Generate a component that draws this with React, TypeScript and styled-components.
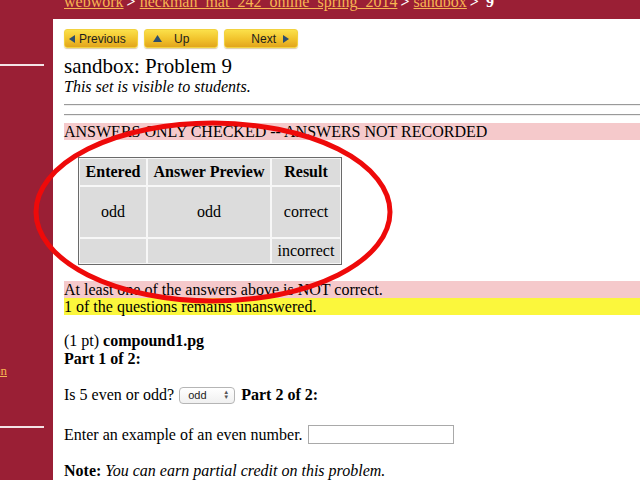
import React from "react";
import styled, { createGlobalStyle } from "styled-components";

const Global = createGlobalStyle`
  html, body { margin: 0; padding: 0; background: #9a1f35; }
  body { font-family: "Liberation Serif", "Times New Roman", serif; font-size: 16px; color: #000; overflow: hidden; }
`;

const Page = styled.div`
  display: grid;
  grid-template-columns: 53px 1fr;
  grid-template-rows: 19px 1fr;
  width: 640px;
  height: 480px;
  position: relative;
  overflow: hidden;
`;

const Sidebar = styled.div`
  grid-row: 1 / 3;
  grid-column: 1;
  background: #9a1f35;
  padding-top: 64px;
  display: flex;
  flex-direction: column;
`;

const SideRule = styled.div<{ $gap: number }>`
  width: 44px;
  height: 2px;
  background: #f3e3e6;
  margin-top: ${(p) => p.$gap}px;
`;

const SideLink = styled.a`
  display: block;
  margin-top: 298px;
  margin-left: -6px;
  font-size: 13px;
  line-height: 14px;
  color: #f7b552;
  text-decoration: underline;
`;

const Crumbs = styled.div`
  grid-row: 1;
  grid-column: 2;
  background: #9a1f35;
  padding-left: 11px;
  font-size: 16px;
  line-height: 16px;
  margin-top: -6px;
  white-space: nowrap;
  overflow: hidden;
`;

const Crumb = styled.a`
  color: #f7b552;
  text-decoration: underline;
`;

const Sep = styled.span`
  color: #fff;
  font-weight: bold;
  margin: 0 4px 0 3px;
`;

const Main = styled.div`
  grid-row: 2;
  grid-column: 2;
  background: #fff;
  padding: 10px 0 0 11px;
`;

const NavBar = styled.div`
  display: flex;
  gap: 6px;
`;

const NavButton = styled.div<{ $justify: string; $pad: number; $gap: number }>`
  width: 74px;
  height: 19px;
  box-sizing: border-box;
  border: 1px solid #f2d23f;
  border-radius: 3px;
  background: linear-gradient(#fbe04a, #f1c22b 55%, #e2a51c);
  box-shadow: 0 1px 1px rgba(160, 110, 0, 0.35);
  display: flex;
  align-items: center;
  justify-content: ${(p) => p.$justify};
  gap: ${(p) => p.$gap}px;
  padding: 0 ${(p) => p.$pad}px;
  font-family: "Liberation Sans", Arial, sans-serif;
  font-size: 12px;
  color: #1d1d1d;
`;

const Tri = styled.svg<{ $w: number }>`
  width: ${(p) => p.$w}px;
  height: 8px;
  fill: #2c4e6e;
  flex: none;
`;

const Title = styled.h1`
  font-size: 21px;
  font-weight: normal;
  margin: 6px 0 0;
  line-height: 24px;
`;

const Visible = styled.div`
  font-style: italic;
  font-size: 16px;
  line-height: 17px;
`;

const Rule = styled.div<{ $top: number }>`
  height: 0;
  border-top: 1px solid #9a9a9a;
  border-bottom: 1px solid #eee;
  margin-top: ${(p) => p.$top}px;
`;

const Banner = styled.div<{ $bg: string; $top?: number }>`
  background: ${(p) => p.$bg};
  margin-top: ${(p) => p.$top ?? 0}px;
  line-height: 17px;
  font-size: 16px;
  white-space: nowrap;
`;

const ResultTable = styled.table`
  margin: 17px 0 16px 14px;
  border: 1px solid #6a6a6a;
  border-spacing: 0;
  border-collapse: separate;
  font-size: 16px;
`;

const Th = styled.th<{ $w: number }>`
  width: ${(p) => p.$w}px;
  height: 26px;
  background: #dcdcdc;
  border: 1px solid #f7f7f7;
  padding: 0;
  font-weight: bold;
`;

const Td = styled.td<{ $h: number }>`
  height: ${(p) => p.$h}px;
  background: #dcdcdc;
  border: 1px solid #f7f7f7;
  text-align: center;
  padding: 0;
`;

const Para = styled.div<{ $top: number }>`
  margin-top: ${(p) => p.$top}px;
  line-height: 18px;
  display: flex;
  align-items: center;
  white-space: nowrap;
`;

const Select = styled.div`
  display: inline-flex;
  align-items: center;
  justify-content: space-between;
  width: 56px;
  height: 17px;
  box-sizing: border-box;
  margin: 0 6px 0 5px;
  padding: 0 5px 0 8px;
  border: 1px solid #b5b5b5;
  border-radius: 4px;
  background: linear-gradient(#fff, #f0f0f0);
  font-family: "Liberation Sans", Arial, sans-serif;
  font-size: 11px;
  color: #222;
`;

const Arrows = styled.span`
  font-size: 6px;
  line-height: 5px;
  display: flex;
  flex-direction: column;
  color: #555;
`;

const Input = styled.div`
  width: 146px;
  height: 19px;
  box-sizing: border-box;
  margin-left: 5px;
  border: 1px solid #a9a9a9;
  background: #fff;
`;

const Ellipse = styled.svg`
  position: absolute;
  left: 0;
  top: 0;
  width: 640px;
  height: 480px;
  pointer-events: none;
`;

export default function App() {
  return (
    <>
      <Global />
      <Page>
        <Sidebar>
          <SideRule $gap={0} />
          <SideLink>on</SideLink>
          <SideRule $gap={48} />
        </Sidebar>
        <Crumbs>
          <Crumb>webwork</Crumb>
          <Sep>&gt;</Sep>
          <Crumb>heckman_mat_242_online_spring_2014</Crumb>
          <Sep>&gt;</Sep>
          <Crumb>sandbox</Crumb>
          <Sep>&gt;</Sep>
          <Sep>9</Sep>
        </Crumbs>
        <Main>
          <NavBar>
            <NavButton $justify="flex-start" $pad={4} $gap={4}>
              <Tri $w={6} viewBox="0 0 6 8"><polygon points="6,0 6,8 0,4" /></Tri>
              Previous
            </NavButton>
            <NavButton $justify="flex-start" $pad={8} $gap={12}>
              <Tri $w={9} viewBox="0 0 9 8"><polygon points="0,7 9,7 4.5,0" /></Tri>
              Up
            </NavButton>
            <NavButton $justify="flex-end" $pad={8} $gap={7}>
              Next
              <Tri $w={6} viewBox="0 0 6 8"><polygon points="0,0 0,8 6,4" /></Tri>
            </NavButton>
          </NavBar>
          <Title>sandbox: Problem 9</Title>
          <Visible>This set is visible to students.</Visible>
          <Rule $top={9} />
          <Rule $top={8} />
          <Banner $bg="#f5c9cb" $top={7}>
            ANSWERS ONLY CHECKED -- ANSWERS NOT RECORDED
          </Banner>
          <ResultTable>
            <tbody>
              <tr>
                <Th $w={66}>Entered</Th>
                <Th $w={122}>Answer Preview</Th>
                <Th $w={68}>Result</Th>
              </tr>
              <tr>
                <Td $h={50}>odd</Td>
                <Td $h={50}>odd</Td>
                <Td $h={50}>correct</Td>
              </tr>
              <tr>
                <Td $h={24}></Td>
                <Td $h={24}></Td>
                <Td $h={24}>incorrect</Td>
              </tr>
            </tbody>
          </ResultTable>
          <Banner $bg="#f5c9cb">At least one of the answers above is NOT correct.</Banner>
          <Banner $bg="#fbf73c">1 of the questions remains unanswered.</Banner>
          <Para $top={17}>
            (1 pt)&nbsp;<b>compound1.pg</b>
          </Para>
          <Para $top={0}>
            <b>Part 1 of 2:</b>
          </Para>
          <Para $top={18}>
            Is 5 even or odd?
            <Select>
              odd
              <Arrows>
                <span>▲</span>
                <span>▼</span>
              </Arrows>
            </Select>
            <b>Part 2 of 2:</b>
          </Para>
          <Para $top={21}>
            Enter an example of an even number.
            <Input />
          </Para>
          <Para $top={18}>
            <b>Note:</b>&nbsp;<i>You can earn partial credit on this problem.</i>
          </Para>
        </Main>
        <Ellipse viewBox="0 0 640 480">
          <ellipse cx="213" cy="212" rx="177" ry="89" fill="none" stroke="#ee0a0a" strokeWidth="5" />
        </Ellipse>
      </Page>
    </>
  );
}
